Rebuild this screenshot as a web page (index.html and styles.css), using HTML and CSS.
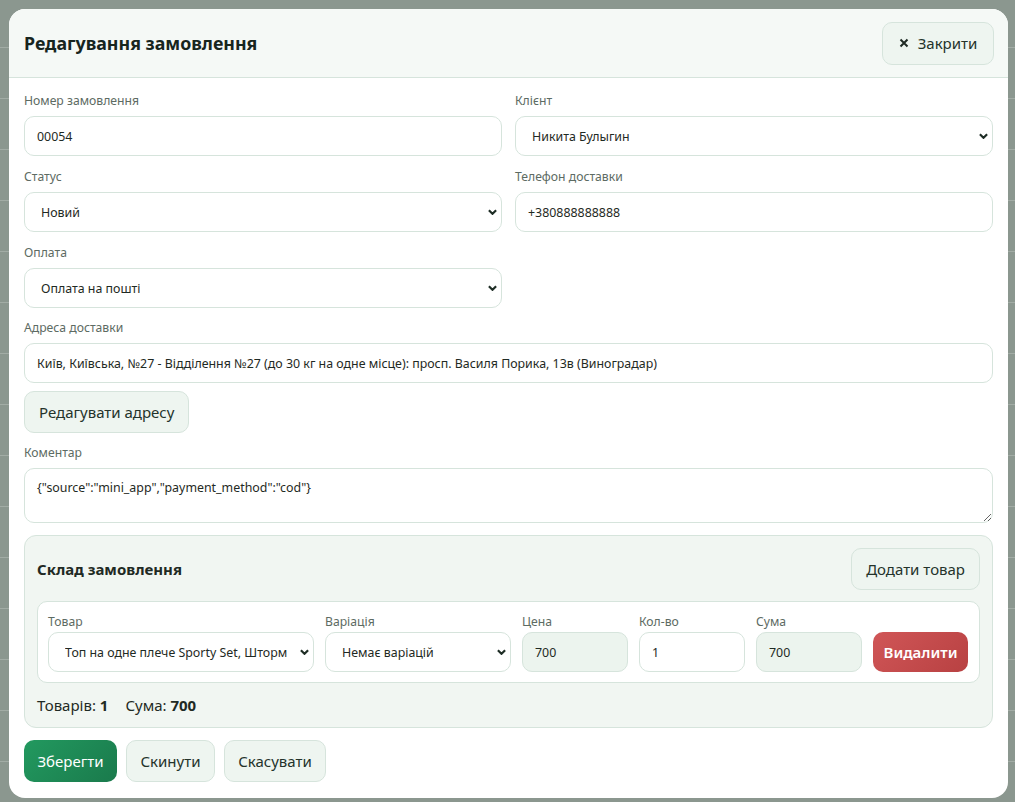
FILE: index.html
```html
<!DOCTYPE html>
<html lang="uk">
<head>
<meta charset="UTF-8" />
<meta name="viewport" content="width=device-width, initial-scale=1" />
<title>Редагування замовлення</title>
<link rel="stylesheet" href="styles.css">
</head>
<body>
  <div class="modal">
    <div class="modal-head">
      <h2>Редагування замовлення</h2>
      <button class="btn btn-light close-btn">
        <svg class="x" viewBox="0 0 10 10"><path d="M1.5 1.5l7 7M8.5 1.5l-7 7" /></svg>
        Закрити
      </button>
    </div>

    <div class="modal-body">
      <div class="grid2">
        <div class="field">
          <label>Номер замовлення</label>
          <input class="input" value="00054">
        </div>
        <div class="field">
          <label>Клієнт</label>
          <div class="select"><span>Никита Булыгин</span><svg viewBox="0 0 10 6"><path d="M1 1l4 4 4-4" /></svg></div>
        </div>
        <div class="field">
          <label>Статус</label>
          <div class="select"><span>Новий</span><svg viewBox="0 0 10 6"><path d="M1 1l4 4 4-4" /></svg></div>
        </div>
        <div class="field">
          <label>Телефон доставки</label>
          <input class="input" value="+380888888888">
        </div>
        <div class="field">
          <label>Оплата</label>
          <div class="select"><span>Оплата на пошті</span><svg viewBox="0 0 10 6"><path d="M1 1l4 4 4-4" /></svg></div>
        </div>
      </div>

      <div class="field addr">
        <label>Адреса доставки</label>
        <input class="input" value="Київ, Київська, №27 - Відділення №27 (до 30 кг на одне місце): просп. Василя Порика, 13в (Виноградар)">
      </div>
      <button class="btn btn-light addr-btn">Редагувати адресу</button>

      <div class="field">
        <label>Коментар</label>
        <textarea class="input textarea">{"source":"mini_app","payment_method":"cod"}</textarea>
      </div>

      <div class="items">
        <div class="items-head">
          <h3>Склад замовлення</h3>
          <button class="btn btn-light">Додати товар</button>
        </div>
        <div class="item-row">
          <div class="field f-product">
            <label>Товар</label>
            <div class="select"><span>Топ на одне плече Sporty Set, Шторм</span><svg viewBox="0 0 10 6"><path d="M1 1l4 4 4-4" /></svg></div>
          </div>
          <div class="field f-var">
            <label>Варіація</label>
            <div class="select"><span>Немає варіацій</span><svg viewBox="0 0 10 6"><path d="M1 1l4 4 4-4" /></svg></div>
          </div>
          <div class="field f-num">
            <label>Цена</label>
            <input class="input ro" value="700">
          </div>
          <div class="field f-num">
            <label>Кол-во</label>
            <input class="input" value="1">
          </div>
          <div class="field f-num">
            <label>Сума</label>
            <input class="input ro" value="700">
          </div>
          <button class="btn btn-danger">Видалити</button>
        </div>
        <div class="totals">Товарів: <b>1</b><span class="sp"></span>Сума: <b>700</b></div>
      </div>

      <div class="actions">
        <button class="btn btn-primary save">Зберегти</button>
        <button class="btn btn-light reset">Скинути</button>
        <button class="btn btn-light cancel">Скасувати</button>
      </div>
    </div>
  </div>
</body>
</html>
```

FILE: styles.css
```css
body {
  margin: 0;
  padding: 9px;
  background: repeating-linear-gradient(to bottom, #8b978f 0 50px, #a2aca5 50px 51px);
  background-position: 0 -3px;
  font-family: "Noto Sans", Arial, sans-serif;
  color: #1f2a24;
}
.modal {
  width: 999px;
  height: 789px;
  background: #fff;
  border-radius: 16px;
  overflow: hidden;
  box-sizing: border-box;
}
.modal-head {
  display: flex;
  align-items: center;
  justify-content: space-between;
  height: 68px;
  padding: 0 14px 0 15px;
  background: #f5f9f6;
  border-bottom: 1px solid #d6e4dc;
}
.modal-head h2 {
  margin: 0;
  font-size: 17.8px;
  font-weight: 700;
  color: #17251e;
}
.modal-body {
  padding: 14px 15px 0 15px;
}
.grid2 {
  display: grid;
  grid-template-columns: 1fr 1fr;
  column-gap: 13px;
}
.field {
  display: flex;
  flex-direction: column;
  margin-bottom: 12px;
}
.field.addr {
  margin-top: -1px;
}
.field label {
  font-size: 12.2px;
  color: #5d6b63;
  line-height: 17px;
  margin-bottom: 7px;
}
.input, .select {
  box-sizing: border-box;
  height: 40px;
  border: 1px solid #d6e4dc;
  border-radius: 10px;
  background: #fff;
  font-family: inherit;
  font-size: 12.4px;
  color: #1f2a24;
  padding: 0 12px;
  outline: none;
}
.select {
  display: flex;
  align-items: center;
  justify-content: space-between;
  gap: 6px;
  padding: 0 4px 0 16px;
}
.select span {
  white-space: nowrap;
  overflow: hidden;
}
.select svg {
  width: 9px;
  height: 6px;
  flex: none;
  fill: none;
  stroke: #1f2e26;
  stroke-width: 2.4;
}
.textarea {
  height: 55px;
  padding: 10px 12px;
  resize: vertical;
  line-height: 18px;
}
.btn {
  box-sizing: border-box;
  height: 42px;
  border-radius: 10px;
  padding: 0 14px;
  font-family: inherit;
  font-size: 15px;
  cursor: pointer;
}
.btn-light {
  background: #eef5f0;
  border: 1px solid #d6e4dc;
  color: #24332b;
}
.close-btn {
  width: 112px;
  height: 43px;
  display: flex;
  align-items: center;
  justify-content: center;
  gap: 9px;
}
.close-btn .x {
  width: 10px;
  height: 10px;
  fill: none;
  stroke: #1f2a24;
  stroke-width: 2;
}
.addr-btn {
  margin: -4px 0 11px 0;
}
.items {
  background: #f1f6f2;
  border: 1px solid #d6e4dc;
  border-radius: 12px;
  padding: 12px 12px 12px 12px;
  margin-top: 1px;
}
.items-head {
  display: flex;
  justify-content: space-between;
  align-items: center;
  margin-bottom: 11px;
}
.items-head h3 {
  margin: 0;
  font-size: 15px;
  font-weight: 700;
}
.item-row {
  display: flex;
  align-items: flex-end;
  gap: 11px;
  background: #fff;
  border: 1px solid #d6e4dc;
  border-radius: 10px;
  padding: 11px 11px 10px 10px;
}
.item-row .field {
  margin-bottom: 0;
  flex: none;
  min-width: 0;
}
.item-row .field label {
  margin-bottom: 2px;
}
.f-product { width: 266px; }
.f-var { width: 186px; }
.f-num { width: 106px; }
.ro {
  background: #ecf4ee;
}
.btn-danger {
  flex: none;
  height: 40px;
  width: 95px;
  padding: 0;
  border: none;
  color: #fff;
  font-weight: 600;
  background: linear-gradient(135deg, #d05657, #b84142);
}
.totals {
  margin-top: 12px;
  font-size: 15px;
  line-height: 20px;
  color: #1f2a24;
}
.totals .sp {
  display: inline-block;
  width: 17px;
}
.actions {
  display: flex;
  gap: 9px;
  margin-top: 12px;
}
.btn-primary {
  border: none;
  color: #fff;
  background: linear-gradient(135deg, #22995f, #1a7a4c);
}
.save { width: 93px; padding: 0; }
.reset { width: 89px; padding: 0; }
.cancel { width: 102px; padding: 0; }
```
